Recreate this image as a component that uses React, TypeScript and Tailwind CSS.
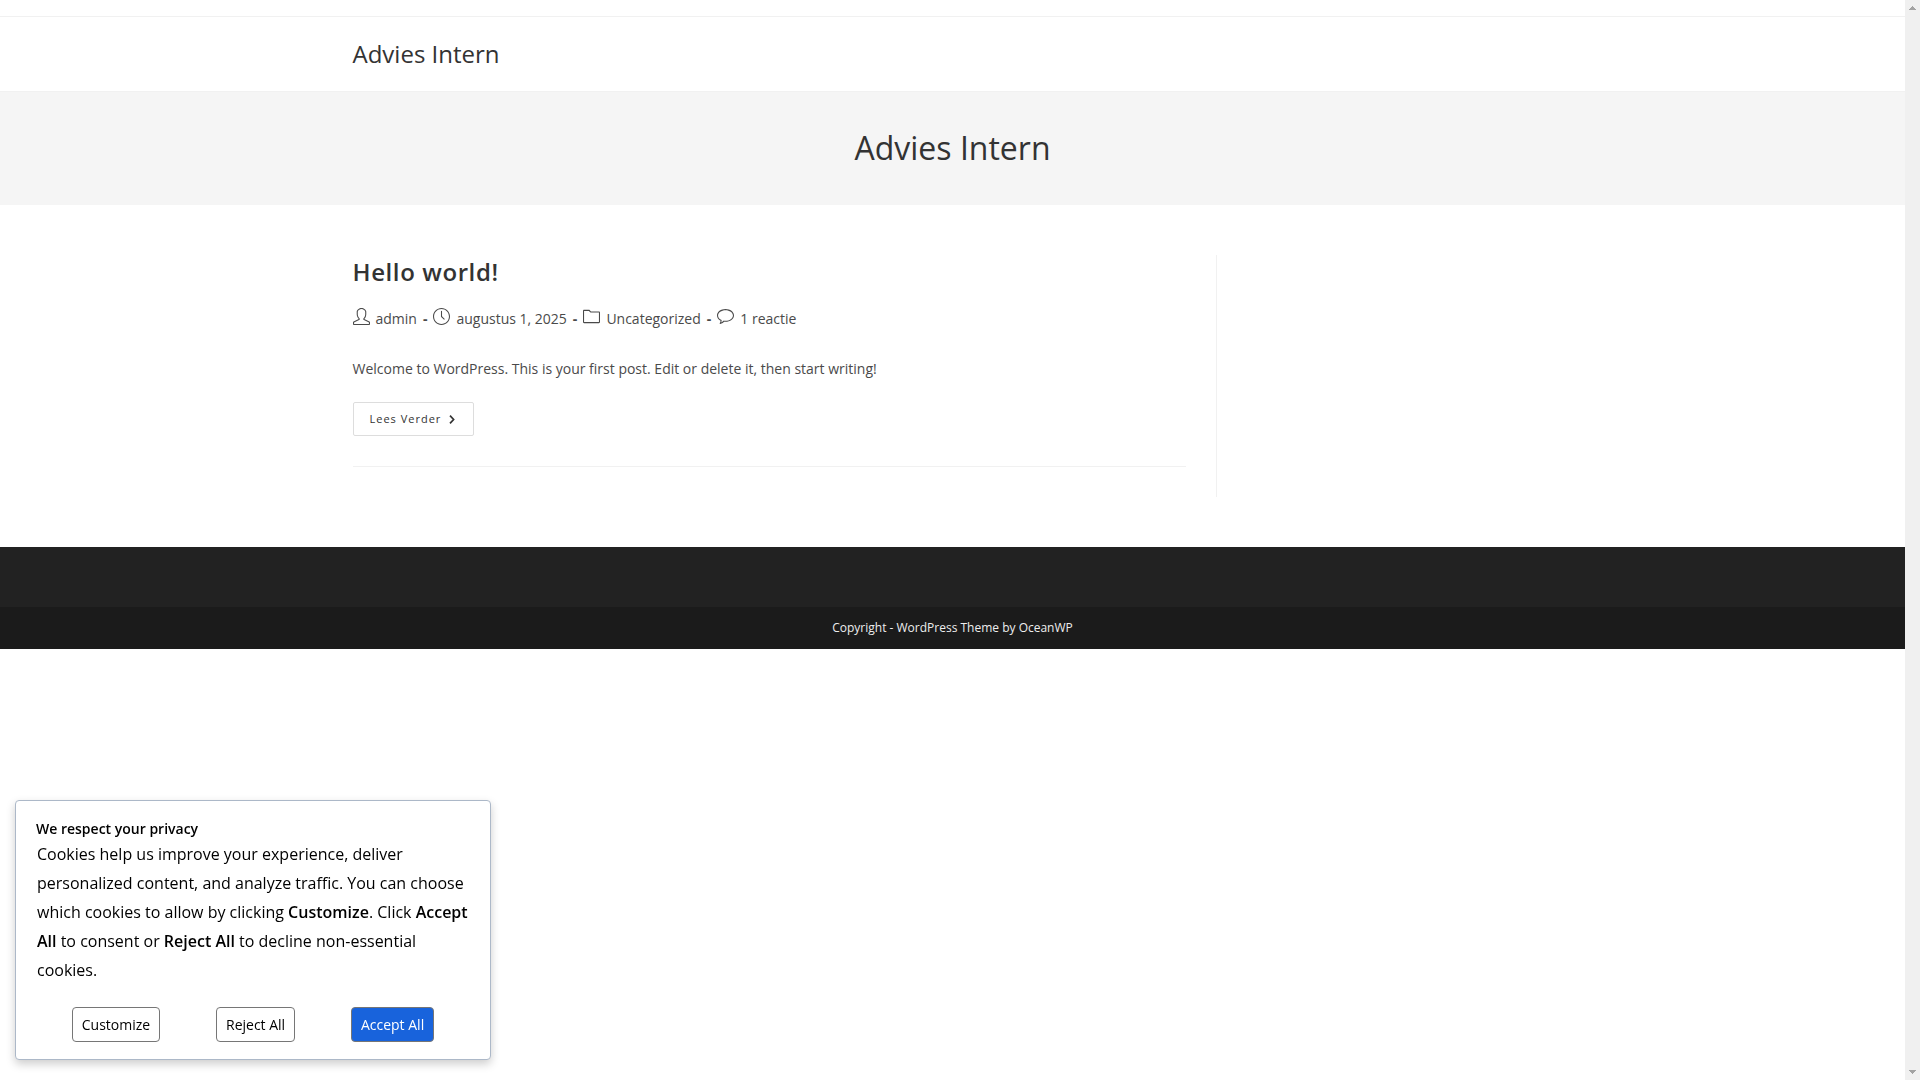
import { SlUser, SlClock, SlFolder, SlBubble } from "react-icons/sl";

const meta = [
  { icon: SlUser, label: "Post author", text: "admin", link: true },
  { icon: SlClock, label: "Post date", text: "augustus 1, 2025", link: false },
  { icon: SlFolder, label: "Post category", text: "Uncategorized", link: true },
  { icon: SlBubble, label: "Post comments", text: "1 reactie", link: true },
];

function SiteHeader() {
  return (
    <>
      <div className="h-[17px] border-b border-[#f1f1f1]" />
      <header className="border-b border-[#f1f1f1]">
        <div className="mx-auto flex h-[74px] max-w-[1200px] items-center">
          <a href="#" className="text-2xl text-[#333]">Advies Intern</a>
        </div>
      </header>
      <section className="bg-[#f5f5f5] pt-[33px] pb-[35px] text-center">
        <h1 className="text-[32px] leading-[45px] text-[#333]">Advies Intern</h1>
      </section>
    </>
  );
}

function PostMeta() {
  return (
    <ul className="mt-[19px] flex items-center text-sm leading-5 text-[#4a4a4a]">
      {meta.map(({ icon: Icon, label, text, link }, i) => (
        <li key={text} className="flex items-center">
          <Icon aria-label={label} className="mr-1.5 mb-1 size-[17px]" />
          {link ? <a href="#">{text}</a> : <span>{text}</span>}
          {i < meta.length - 1 && <span className="mx-1.5 font-bold">-</span>}
        </li>
      ))}
    </ul>
  );
}

function Post() {
  return (
    <article className="border-b border-[#f1f1f1] pb-[30px]">
      <h2 className="text-2xl leading-[34px] font-semibold tracking-wide text-[#333]">
        <a href="#">Hello world!</a>
      </h2>
      <PostMeta />
      <p className="mt-[27px] text-sm leading-[25px] text-[#4a4a4a]">
        Welcome to WordPress. This is your first post. Edit or delete it, then start writing!
      </p>
      <a
        href="#"
        className="mt-[21px] inline-flex h-[34px] items-center gap-2 rounded-xs border border-[#ddd] pr-[18px] pl-4 text-[11px] tracking-[1px] text-[#333]"
      >
        Lees Verder
        <svg viewBox="0 0 6 9" className="h-[9px] w-1.5" fill="none" stroke="#333" strokeWidth="1.7" aria-hidden="true">
          <path d="M1 0.7 4.6 4.5 1 8.3" />
        </svg>
      </a>
    </article>
  );
}

function CookieBanner() {
  const button = "h-[35px] rounded border border-[#767676] px-[9px] text-sm";
  return (
    <section
      aria-label="Cookie consent"
      className="fixed bottom-5 left-[15px] w-[476px] rounded border border-[#acb8c8] bg-white pt-[18px] pb-[17px] text-black shadow-[0_4px_10px_rgba(0,0,0,0.2)]"
    >
      <h3 className="px-5 text-sm leading-5 font-semibold">We respect your privacy</h3>
      <p className="mt-px px-[21px] text-base leading-[29px]">
        Cookies help us improve your experience, deliver personalized content, and analyze traffic. You can
        choose which cookies to allow by clicking <strong className="font-semibold">Customize</strong>. Click{" "}
        <strong className="font-semibold">Accept All</strong> to consent or{" "}
        <strong className="font-semibold">Reject All</strong> to decline non-essential cookies.
      </p>
      <div className="mt-[22px] flex justify-evenly">
        <button type="button" className={button}>Customize</button>
        <button type="button" className={button}>Reject All</button>
        <button type="button" className="h-[35px] rounded border border-[#767676] bg-[#1863dc] px-[9px] text-sm text-white">
          Accept All
        </button>
      </div>
    </section>
  );
}

function ScrollTrack() {
  return (
    <div className="flex w-[15px] shrink-0 flex-col items-center justify-between bg-[#f0f0f0] py-1.5" aria-hidden="true">
      <svg viewBox="0 0 7 4" className="h-1 w-[7px]" fill="#a3a3a3" shapeRendering="crispEdges">
        <path d="M3 0h1v1h1v1h1v1h1v1H0V3h1V2h1V1h1z" />
      </svg>
      <svg viewBox="0 0 7 4" className="h-1 w-[7px]" fill="#a3a3a3" shapeRendering="crispEdges">
        <path d="M0 0h7v1H6v1H5v1H4v1H3V3H2V2H1V1H0z" />
      </svg>
    </div>
  );
}

export default function App() {
  return (
    <div className="flex min-h-screen bg-white font-['Open_Sans',sans-serif]">
      <div className="min-w-0 flex-1">
        <SiteHeader />
        <main className="mx-auto max-w-[1200px] py-[50px]">
          <div className="w-[72%] border-r border-[#f1f1f1] pr-[30px] pb-[30px]">
            <Post />
          </div>
        </main>
        <footer>
          <div className="h-[60px] bg-[#222]" />
          <div className="bg-[#1b1b1b] py-3 text-center text-xs leading-[18px] text-[#eee]">
            Copyright - WordPress Theme by OceanWP
          </div>
        </footer>
      </div>
      <ScrollTrack />
      <CookieBanner />
    </div>
  );
}
